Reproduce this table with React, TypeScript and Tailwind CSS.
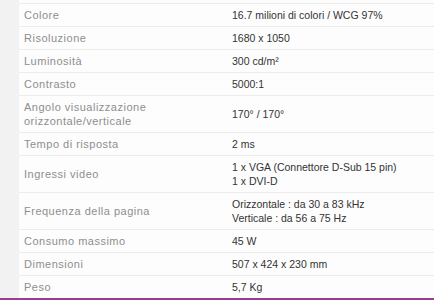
const specs: { label: string[]; value: string[] }[] = [
  { label: ["Colore"], value: ["16.7 milioni di colori / WCG 97%"] },
  { label: ["Risoluzione"], value: ["1680 x 1050"] },
  { label: ["Luminosità"], value: ["300 cd/m²"] },
  { label: ["Contrasto"], value: ["5000:1"] },
  { label: ["Angolo visualizzazione", "orizzontale/verticale"], value: ["170° / 170°"] },
  { label: ["Tempo di risposta"], value: ["2 ms"] },
  { label: ["Ingressi video"], value: ["1 x VGA (Connettore D-Sub 15 pin)", "1 x DVI-D"] },
  { label: ["Frequenza della pagina"], value: ["Orizzontale : da 30 a 83 kHz", "Verticale : da 56 a 75 Hz"] },
  { label: ["Consumo massimo"], value: ["45 W"] },
  { label: ["Dimensioni"], value: ["507 x 424 x 230 mm"] },
  { label: ["Peso"], value: ["5,7 Kg"] },
];

export default function App() {
  return (
    <div className="w-[434px] h-[300px] overflow-hidden bg-[#f2f2f2] font-['Liberation_Sans',Arial,sans-serif]">
      <div className="flex">
        <div className="w-[19px] shrink-0" />
        <div className="flex-1 bg-[#fdfdfd] pt-[3px]">
          <div className="border-t border-[#ececec]">
            {specs.map((row, i) => (
              <div
                key={row.label[0]}
                className={
                  "flex items-center py-[4px] " +
                  (i < specs.length - 1 ? "border-b border-[#ececec]" : "")
                }
              >
                <div className="w-[208px] shrink-0 pl-[5px] text-[11px] leading-[14px] tracking-[0.5px] text-[#8e8e8e]">
                  {row.label.map((t) => (
                    <div key={t}>{t}</div>
                  ))}
                </div>
                <div className="pl-[5px] text-[10.5px] leading-[14px] text-[#333333]">
                  {row.value.map((t) => (
                    <div key={t}>{t}</div>
                  ))}
                </div>
              </div>
            ))}
          </div>
        </div>
      </div>
      <div className="h-[2px] bg-[#9c3c8e]" />
    </div>
  );
}
